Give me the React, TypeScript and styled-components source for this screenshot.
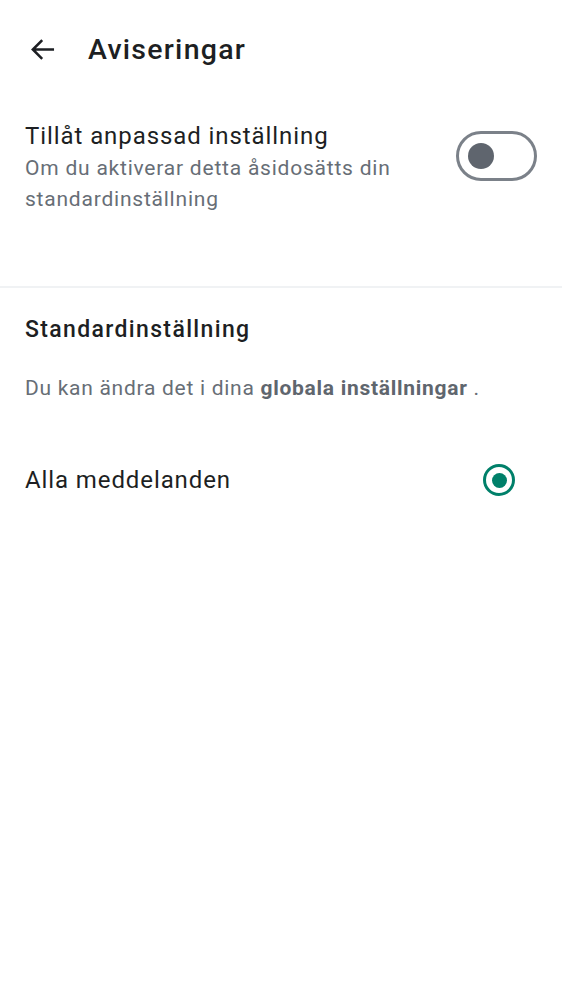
import React from "react";
import styled, { createGlobalStyle } from "styled-components";

const Global = createGlobalStyle`
  html, body { margin: 0; padding: 0; background: #ffffff; }
  body { font-family: Roboto, "Noto Sans", Arial, sans-serif; -webkit-font-smoothing: antialiased; }
  * { box-sizing: border-box; }
`;

const Page = styled.div`
  width: 562px;
  min-height: 1000px;
  background: #ffffff;
  display: flex;
  flex-direction: column;
`;

const Header = styled.header`
  height: 98px;
  display: flex;
  align-items: center;
  padding-left: 28px;
  gap: 31px;
`;

const BackButton = styled.button`
  width: 29px;
  height: 29px;
  padding: 0;
  border: none;
  background: transparent;
  display: flex;
  align-items: center;
  justify-content: center;
  color: #1d1f23;
`;

const HeaderTitle = styled.h1`
  margin: 0;
  font-size: 28.5px;
  font-weight: 500;
  color: #1d1f23;
  letter-spacing: 1.25px;
`;

const SettingRow = styled.div`
  display: flex;
  justify-content: space-between;
  align-items: flex-start;
  padding: 23px 25px 71px 25px;
`;

const TextBlock = styled.div`
  display: flex;
  flex-direction: column;
  max-width: 410px;
`;

const RowTitle = styled.div`
  font-size: 24px;
  line-height: 30px;
  color: #1d1f23;
  letter-spacing: 0.92px;
  height: 32px;
`;

const RowSubtitle = styled.div`
  font-size: 21px;
  line-height: 31px;
  color: #676e76;
  letter-spacing: 0.78px;
`;

const Toggle = styled.div<{ $on?: boolean }>`
  margin-top: 10px;
  width: 81px;
  height: 50px;
  border: 3px solid #7b8189;
  border-radius: 25px;
  display: flex;
  align-items: center;
  padding-left: 9px;
  flex-shrink: 0;
`;

const Knob = styled.div`
  width: 26px;
  height: 26px;
  border-radius: 50%;
  background: #5f656e;
`;

const Divider = styled.hr`
  margin: 0;
  border: none;
  height: 2px;
  background: #f0f2f4;
`;

const Section = styled.section`
  padding: 27px 25px 0 25px;
  display: flex;
  flex-direction: column;
`;

const SectionTitle = styled.h2`
  margin: 0;
  font-size: 23px;
  line-height: 30px;
  font-weight: 500;
  color: #1d1f23;
  letter-spacing: 1.35px;
`;

const Hint = styled.p`
  margin: 28px 0 0 0;
  font-size: 21px;
  line-height: 30px;
  color: #676e76;
  letter-spacing: 0.72px;

  b {
    font-weight: 700;
    color: #5f666e;
  }
`;

const OptionRow = styled.label`
  margin-top: 61px;
  display: flex;
  align-items: center;
  justify-content: space-between;
  padding-right: 22px;
`;

const OptionLabel = styled.span`
  font-size: 24px;
  line-height: 30px;
  color: #1d1f23;
  letter-spacing: 0.9px;
`;

const Radio = styled.span<{ $checked?: boolean }>`
  width: 32px;
  height: 32px;
  border-radius: 50%;
  border: 3.3px solid #00806a;
  display: flex;
  align-items: center;
  justify-content: center;

  &::after {
    content: "";
    width: 15px;
    height: 15px;
    border-radius: 50%;
    background: ${(p) => (p.$checked ? "#00806a" : "transparent")};
  }
`;

export default function App() {
  return (
    <Page>
      <Global />
      <Header>
        <BackButton aria-label="Tillbaka">
          <svg width="29" height="29" viewBox="0 0 24 24" fill="none">
            <path
              d="M20.5 12H4.5M11 5l-7 7 7 7"
              stroke="currentColor"
              strokeWidth="2.1"
              strokeLinecap="square"
            />
          </svg>
        </BackButton>
        <HeaderTitle>Aviseringar</HeaderTitle>
      </Header>

      <SettingRow>
        <TextBlock>
          <RowTitle>Tillåt anpassad inställning</RowTitle>
          <RowSubtitle>Om du aktiverar detta åsidosätts din standardinställning</RowSubtitle>
        </TextBlock>
        <Toggle>
          <Knob />
        </Toggle>
      </SettingRow>

      <Divider />

      <Section>
        <SectionTitle>Standardinställning</SectionTitle>
        <Hint>
          Du kan ändra det i dina <b>globala inställningar</b> .
        </Hint>
        <OptionRow>
          <OptionLabel>Alla meddelanden</OptionLabel>
          <Radio $checked />
        </OptionRow>
      </Section>
    </Page>
  );
}
